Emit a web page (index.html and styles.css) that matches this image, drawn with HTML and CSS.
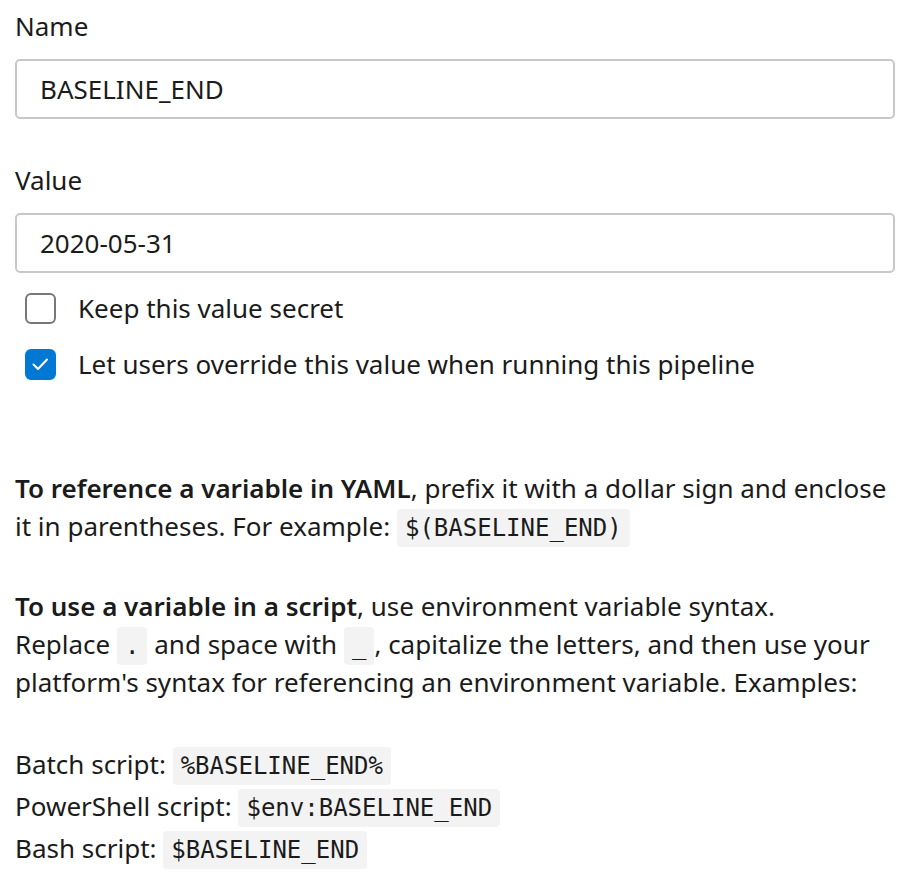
FILE: index.html
```html
<!DOCTYPE html>
<html lang="en">
<head>
<meta charset="utf-8">
<title>Variable</title>
<link rel="stylesheet" href="styles.css">
</head>
<body>
<div class="panel">
  <div class="field">
    <label class="label" for="name">Name</label>
    <div class="input" id="name">BASELINE_END</div>
  </div>
  <div class="field field-second">
    <label class="label" for="value">Value</label>
    <div class="input" id="value">2020-05-31</div>
  </div>
  <div class="checks">
    <div class="check-row">
      <span class="box"></span>
      <span class="check-text">Keep this value secret</span>
    </div>
    <div class="check-row">
      <span class="box box-checked">
        <svg viewBox="0 0 30 30" width="30" height="30"><path d="M8.5 15.5 L13 20 L22 10.5" fill="none" stroke="#fff" stroke-width="2" stroke-linecap="round" stroke-linejoin="round"/></svg>
      </span>
      <span class="check-text">Let users override this value when running this pipeline</span>
    </div>
  </div>
  <p class="para para-first"><strong>To reference a variable in YAML</strong>, prefix it with a dollar sign and enclose it in parentheses. For example: <code>$(BASELINE_END)</code></p>
  <p class="para"><strong>To use a variable in a script</strong>, use environment variable syntax.<br>Replace <code>.</code> and space with <code>_</code>, capitalize the letters, and then use your platform's syntax for referencing an environment variable. Examples:</p>
  <div class="examples">
    <div>Batch script: <code>%BASELINE_END%</code></div>
    <div>PowerShell script: <code>$env:BASELINE_END</code></div>
    <div>Bash script: <code>$BASELINE_END</code></div>
  </div>
</div>
</body>
</html>
```

FILE: styles.css
```css
html, body {
  margin: 0;
  padding: 0;
  background: #ffffff;
}
body {
  font-family: "Noto Sans", "Open Sans", sans-serif;
  font-size: 26px;
  color: #1b1b1b;
}
.panel {
  padding: 7px 15px 0 15px;
  width: 880px;
}
.field {
  display: flex;
  flex-direction: column;
  gap: 14px;
}
.field-second {
  margin-top: 42px;
}
.label {
  line-height: 38px;
  display: block;
}
.input {
  box-sizing: border-box;
  height: 60px;
  border: 2px solid #c8c8c8;
  border-radius: 5px;
  padding: 0 23px;
  display: flex;
  align-items: center;
  line-height: 38px;
}
.checks {
  margin-top: 16px;
  display: flex;
  flex-direction: column;
  gap: 18px;
}
.check-row {
  display: flex;
  align-items: center;
  height: 38px;
  padding-left: 10px;
}
.box {
  box-sizing: border-box;
  width: 31px;
  height: 31px;
  border: 2px solid #787878;
  border-radius: 6px;
  margin-right: 22px;
  flex: none;
  display: flex;
}
.box-checked {
  background: #0078d4;
  border-color: #0078d4;
}
.box-checked svg {
  margin: -2px;
}
.check-text {
  line-height: 38px;
}
.para {
  margin: 0;
  line-height: 38px;
}
.para-first {
  margin-top: 86px;
}
.para + .para {
  margin-top: 42px;
}
strong {
  font-weight: 600;
}
code {
  font-family: "DejaVu Sans Mono", "Liberation Mono", monospace;
  font-size: 24px;
  line-height: 1;
  background: #f3f3f3;
  border-radius: 4px;
  padding: 5px 8px;
}
.examples {
  margin-top: 42px;
  line-height: 42px;
}
```
